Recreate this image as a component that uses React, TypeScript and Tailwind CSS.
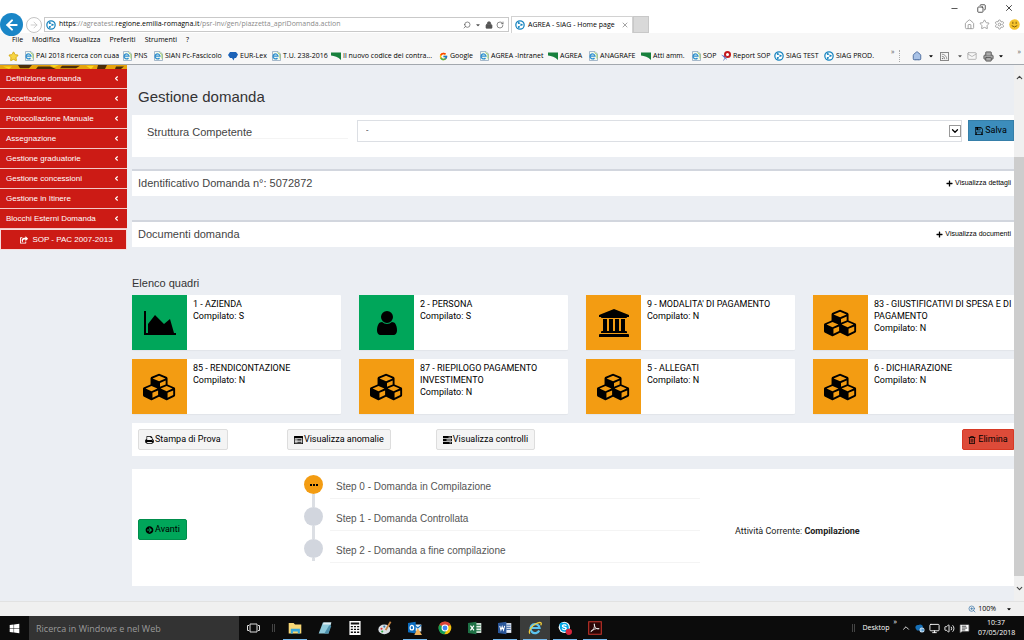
import React, { useState } from 'react';
import {
  Home, Star, Settings, Search, Lock, RotateCw, ArrowLeft, ArrowRight, Mail, Rss, Printer,
  ChevronUp, ChevronDown, ChevronLeft, Minus, X, Copy, Volume2, MessageSquareText, Monitor, ZoomIn,
} from 'lucide-react';
import { FaArrowCircleRight, FaPlus, FaRegTrashAlt, FaShareSquare, FaCaretDown, FaWindows, FaSkype } from 'react-icons/fa';
import { FcGoogle } from 'react-icons/fc';

const iconPaths = {
  chart: {
    box: '0 0 2048 1536',
    d: 'M2048 1408v128h-2048v-1536h128v1408h1920zM1664 512l256 896h-1664v-576l448-576 576 576z',
  },
  user: {
    box: '192 128 1408 1536',
    d: 'M1536 1399q0 109-62.5 187t-150.5 78h-854q-88 0-150.5-78t-62.5-187q0-85 8.5-160.5t31.5-152 58.5-131 94-89 134.5-34.5q131 128 313 128t313-128q76 0 134.5 34.5t94 89 58.5 131 31.5 152 8.5 160.5zm-256-887q0 159-112.5 271.5t-271.5 112.5-271.5-112.5-112.5-271.5 112.5-271.5 271.5-112.5 271.5 112.5 112.5 271.5z',
  },
  bank: {
    box: '0 0 1920 1792',
    d: 'M960 0l960 384v128h-128q0 26-20.5 45t-48.5 19h-1526q-28 0-48.5-19t-20.5-45h-128v-128zM256 640h256v768h128v-768h256v768h128v-768h256v768h128v-768h256v768h59q28 0 48.5 19t20.5 45v64h-1664v-64q0-26 20.5-45t48.5-19h59v-768zM1851 1600q28 0 48.5 19t20.5 45v128h-1920v-128q0-26 20.5-45t48.5-19h1782z',
  },
  cubes: {
    box: '0 0 2304 1792',
    d: 'M640 1632l384-192v-314l-384 164v342zm-64-454l404-173-404-173-404 173zm1088 454l384-192v-314l-384 164v342zm-64-454l404-173-404-173-404 173zm-448-293l384-165v-266l-384 164v267zm-64-379l441-189-441-189-441 189zm1088 518v416q0 36-19 67t-52 47l-448 224q-25 14-57 14t-57-14l-448-224q-4-2-7-4-2 2-7 4l-448 224q-25 14-57 14t-57-14l-448-224q-33-16-52-47t-19-67v-416q0-38 21.5-70t56.5-48l434-186v-400q0-38 21.5-70t56.5-48l448-192q23-10 50-10t50 10l448 192q35 16 56.5 48t21.5 70v400l434 186q36 16 57 48t21 70z',
  },
  print: {
    box: '64 128 1664 1536',
    d: 'M448 1536h896v-256h-896v256zm0-640h896v-384h-160q-40 0-68-28t-28-68v-160h-640v640zm1152 64q0-26-19-45t-45-19-45 19-19 45 19 45 45 19 45-19 19-45zm128 0v416q0 13-9.5 22.5t-22.5 9.5h-224v160q0 40-28 68t-68 28h-960q-40 0-68-28t-28-68v-160h-224q-13 0-22.5-9.5t-9.5-22.5v-416q0-79 56.5-135.5t135.5-56.5h64v-544q0-40 28-68t68-28h672q40 0 88 20t76 48l152 152q28 28 48 76t20 88v256h64q79 0 135.5 56.5t56.5 135.5z',
  },
  save: {
    box: '128 128 1536 1536',
    d: 'M512 1536h768v-384h-768v384zm896 0h128v-896q0-14-10-38.5t-20-34.5l-281-281q-10-10-34-20t-39-10v416q0 40-28 68t-68 28h-576q-40 0-68-28t-28-68v-416h-128v1280h128v-416q0-40 28-68t68-28h832q40 0 68 28t28 68v416zm-384-928v-320q0-13-9.5-22.5t-22.5-9.5h-192q-13 0-22.5 9.5t-9.5 22.5v320q0 13 9.5 22.5t22.5 9.5h192q13 0 22.5-9.5t9.5-22.5zm640 32v928q0 40-28 68t-68 28h-1344q-40 0-68-28t-28-68v-1344q0-40 28-68t68-28h928q40 0 88 20t76 48l280 280q28 28 48 76t20 88z',
  },
  list: {
    box: '0 0 18 16',
    d: 'M1 0h16a1 1 0 0 1 1 1v14a1 1 0 0 1-1 1H1a1 1 0 0 1-1-1V1a1 1 0 0 1 1-1zM1.500 4.500v10h15v-10zM3 6h2v1.500H3zM6.500 6H15v1.500H6.500zM3 9h2v1.500H3zM6.500 9H15v1.500H6.500zM3 12h2v1.500H3zM6.500 12H15v1.500H6.500z',
  },
  tasks: {
    box: '0 0 18 16',
    d: 'M0 0h18v4.400H0zM11 1.400v1.600h5.500V1.400zM0 5.800h18v4.400H0zM7 7.200v1.600h9.500V7.200zM0 11.600h18V16H0zM13 13v1.600h3.500V13z',
  },
};

type IconName = keyof typeof iconPaths;

function Icon({ name, className }: { name: IconName; className: string }) {
  return (
    <svg viewBox={iconPaths[name].box} className={className} fill="currentColor" fillRule="evenodd">
      <path d={iconPaths[name].d} />
    </svg>
  );
}

function SiagIcon({ className = 'w-3 h-3' }: { className?: string }) {
  return (
    <svg viewBox="0 0 24 24" className={className}>
      <circle cx="12" cy="12" r="10" fill="#fff" stroke="#1583bf" strokeWidth="3" />
      <path d="M9 7l6 4-6 6" fill="none" stroke="#1583bf" strokeWidth="1.500" />
      <g fill="#1583bf">
        <circle cx="9" cy="7" r="2.400" />
        <circle cx="16" cy="11.500" r="2.400" />
        <circle cx="9" cy="17" r="2.400" />
      </g>
    </svg>
  );
}

function BookmarkIcon({ kind }: { kind: string }) {
  if (kind === 'siag') return <SiagIcon className="w-[10px] h-[10px] shrink-0" />;
  if (kind === 'google') return <FcGoogle className="w-[9px] h-[9px] shrink-0" />;
  return (
    <svg viewBox="0 0 20 20" className="w-[10px] h-[10px] shrink-0">
      {kind === 'page' && (
        <>
          <path d="M3 1h11l5 5v13H3z" fill="#f4f9ee" stroke="#8ba4bd" strokeWidth="1.500" />
          <path d="M13 14a5 5 0 1 1 1-4H5" fill="none" stroke="#2f8fd0" strokeWidth="2.500" />
          <path d="M13 3l5 4v8" fill="none" stroke="#9ccb66" strokeWidth="2" />
        </>
      )}
      {kind === 'flag' && <path d="M0 3h20v15C14 12 7 10 0 9z" fill="#17803d" />}
      {kind === 'chat' && <path d="M4 2h12l4 5-4 7h-3l-2 5-3-5H4L0 8z" fill="#1c62b7" />}
      {kind === 'report' && (
        <>
          <path d="M0 7l9 4 3 7-5-4z" fill="#4f6fd0" />
          <circle cx="13" cy="7" r="5" fill="#fff" stroke="#c4161c" strokeWidth="4" />
          <path d="M10 11l-5 8" stroke="#7b8cc0" strokeWidth="2" />
        </>
      )}
    </svg>
  );
}

const bookmarks = [
  { label: 'PAI 2018 ricerca con cuaa', kind: 'page', width: 'w-[98px]' },
  { label: 'PNS', kind: 'page', width: 'w-[31px]' },
  { label: 'SIAN Pc-Fascicolo', kind: 'page', width: 'w-[75px]' },
  { label: 'EUR-Lex', kind: 'chat', width: 'w-[43px]' },
  { label: 'T.U. 238-2016', kind: 'page', width: 'w-[60px]' },
  { label: 'Il nuovo codice dei contra...', kind: 'flag', width: 'w-[108px]' },
  { label: 'Google', kind: 'google', width: 'w-[40px]' },
  { label: 'AGREA -Intranet', kind: 'page', width: 'w-[69px]' },
  { label: 'AGREA', kind: 'flag', width: 'w-[40px]' },
  { label: 'ANAGRAFE', kind: 'page', width: 'w-[53px]' },
  { label: 'Atti amm.', kind: 'flag', width: 'w-[50px]' },
  { label: 'SOP', kind: 'page', width: 'w-[30px]' },
  { label: 'Report SOP', kind: 'report', width: 'w-[53px]' },
  { label: 'SIAG TEST', kind: 'siag', width: 'w-[50px]' },
  { label: 'SIAG PROD.', kind: 'siag', width: 'w-[60px]' },
];

const menuItems = [
  'Definizione domanda',
  'Accettazione',
  'Protocollazione Manuale',
  'Assegnazione',
  'Gestione graduatorie',
  'Gestione concessioni',
  'Gestione in Itinere',
  'Blocchi Esterni Domanda',
];

const quadri: { title: string; status: string; icon: IconName; size: string }[] = [
  { title: '1 - AZIENDA', status: 'S', icon: 'chart', size: 'w-8 h-6' },
  { title: '2 - PERSONA', status: 'S', icon: 'user', size: 'w-6 h-6' },
  { title: "9 - MODALITA' DI PAGAMENTO", status: 'N', icon: 'bank', size: 'w-[30px] h-7' },
  { title: '83 - GIUSTIFICATIVI DI SPESA E DI PAGAMENTO', status: 'N', icon: 'cubes', size: 'w-[34px] h-7' },
  { title: '85 - RENDICONTAZIONE', status: 'N', icon: 'cubes', size: 'w-[34px] h-7' },
  { title: '87 - RIEPILOGO PAGAMENTO INVESTIMENTO', status: 'N', icon: 'cubes', size: 'w-[34px] h-7' },
  { title: '5 - ALLEGATI', status: 'N', icon: 'cubes', size: 'w-[34px] h-7' },
  { title: '6 - DICHIARAZIONE', status: 'N', icon: 'cubes', size: 'w-[34px] h-7' },
];

const actions: { label: string; icon: IconName }[] = [
  { label: 'Stampa di Prova', icon: 'print' },
  { label: 'Visualizza anomalie', icon: 'list' },
  { label: 'Visualizza controlli', icon: 'tasks' },
];

const steps = ['Step 0 - Domanda in Compilazione', 'Step 1 - Domanda Controllata', 'Step 2 - Domanda a fine compilazione'];

function BrowserHeader() {
  return (
    <header className="bg-white font-['Open_Sans','Noto_Sans',sans-serif] text-[7px] text-black border-b border-[#a3a8ae]">
      <div className="flex h-4 items-center justify-end gap-[18px] pr-[10px] text-[#222]">
        <button aria-label="Riduci"><Minus className="w-[9px] h-[9px]" /></button>
        <button aria-label="Ripristina"><Copy className="w-[9px] h-[9px] -scale-x-100" /></button>
        <button aria-label="Chiudi"><X className="w-[10px] h-[10px]" /></button>
      </div>
      <div className="flex h-[17px] items-center">
        <button aria-label="Indietro" className="relative z-10 w-[23px] h-[23px] shrink-0 rounded-full bg-[#1a86c7] text-white flex items-center justify-center">
          <ArrowLeft className="w-4 h-4" strokeWidth={3} />
        </button>
        <button aria-label="Avanti" className="ml-[3px] w-4 h-4 shrink-0 rounded-full border border-[#c4c4c4] text-[#c4c4c4] flex items-center justify-center">
          <ArrowRight className="w-[10px] h-[10px]" />
        </button>
        <div className="ml-[2px] w-[46%] max-w-[465px] h-[15px] border border-[#c9c9c9] flex items-center shrink-0 px-[1px] pr-1 text-[#555]">
          <SiagIcon className="w-[10px] h-[10px] shrink-0" />
          <span className="ml-[3px] flex-1 whitespace-nowrap text-[#8a8a8a]">
            <span className="text-black">https</span>://agreatest.<span className="text-black">regione.emilia-romagna.it</span>/psr-inv/gen/piazzetta_apriDomanda.action
          </span>
          <Search className="w-2 h-2 -scale-x-100" />
          <FaCaretDown className="ml-1 w-[6px] h-[6px]" />
          <Lock className="ml-1 w-2 h-2" fill="currentColor" />
          <RotateCw className="ml-[3px] w-2 h-2" />
        </div>
        <div className="ml-[2px] w-[122px] h-[17px] shrink-0 border-x border-t border-[#d2d2d2] bg-white flex items-center px-[3px]">
          <SiagIcon className="w-[10px] h-[10px] shrink-0" />
          <span className="ml-[3px] flex-1 whitespace-nowrap">AGREA - SIAG - Home page</span>
          <X className="w-2 h-2 text-[#777]" />
        </div>
        <button aria-label="Nuova scheda" className="w-4 h-[17px] shrink-0 bg-[#d9d9d9] border border-[#c8c8c8]" />
        <div className="ml-auto flex items-center gap-1 pr-1 text-[#9b9b9b]">
          <Home className="w-[11px] h-[11px]" />
          <Star className="w-[11px] h-[11px]" />
          <Settings className="w-[11px] h-[11px]" />
          <svg viewBox="0 0 20 20" className="w-[11px] h-[11px]">
            <circle cx="10" cy="10" r="9.500" fill="#f5c32c" />
            <path d="M7 5v4M13 5v4M5 12q5 5 10 0" fill="none" stroke="#6b4b00" strokeWidth="1.500" />
          </svg>
        </div>
      </div>
      <nav className="flex h-[15px] items-center gap-[9px] bg-[#f7f7f7] pl-3">
        {['File', 'Modifica', 'Visualizza', 'Preferiti', 'Strumenti', '?'].map((item) => (
          <button key={item}>{item}</button>
        ))}
      </nav>
      <div className="flex h-4 items-center bg-[#f7f7f7] pl-2">
        <Star className="w-[11px] h-[11px] mr-[5px] shrink-0 text-[#d3a712]" fill="#f7d543" />
        {bookmarks.map((b) => (
          <a key={b.label} href="#" className={`${b.width} shrink-0 flex items-center gap-[2px] whitespace-nowrap`}>
            <BookmarkIcon kind={b.kind} />
            {b.label}
          </a>
        ))}
        <div className="ml-auto flex items-center shrink-0 text-[#555]">
          <span className="mr-1 pb-2">»</span>
          <span className="h-3 border-l border-dotted border-[#aaa] mr-3" />
          <Home className="w-[10px] h-[10px] text-[#3d5f93]" fill="#a9c2e6" />
          <FaCaretDown className="ml-[6px] w-[6px] h-[6px] text-black" />
          <Rss className="ml-[6px] w-[9px] h-[9px] border border-[#888]" />
          <FaCaretDown className="ml-2 w-[6px] h-[6px]" />
          <Mail className="ml-1 w-[10px] h-[10px] text-[#aaa]" />
          <Printer className="ml-[6px] w-[11px] h-[11px]" fill="#aaa" />
          <FaCaretDown className="ml-1 w-[6px] h-[6px] text-black" />
          <span className="ml-[14px] mr-[3px] pb-2">»</span>
        </div>
      </div>
    </header>
  );
}

function Sidebar() {
  return (
    <aside className="w-[127px] shrink-0 font-['Liberation_Sans',Arial,sans-serif] text-[8px] text-white">
      <svg viewBox="0 0 127 5" preserveAspectRatio="none" className="block w-full h-[4px]">
        <rect width="127" height="5" fill="#e5a20c" />
        <path d="M18 0h14l-3 4h-9zM38 2h12l6 3H36zM62 1h18l-4 3H60zM98 0h9l-2 5h-8zM116 2h8l-3 3h-6z" fill="#4b2c08" />
        <path d="M3 2h9l-3 3zM50 0h9l-5 3zM86 1h8l-3 4z" fill="#f8d51b" />
      </svg>
      <nav>
        {menuItems.map((item) => (
          <a key={item} href="#" className="flex h-5 items-center justify-between bg-[#cc1b15] border-b border-[#f3c9c7] pl-[6px] pr-[7px]">
            {item}
            <ChevronLeft className="w-[7px] h-[7px]" strokeWidth={4} />
          </a>
        ))}
        <a href="#" className="flex h-[21px] items-center justify-center gap-1 bg-[#cc1b15] border border-[#f6dcdb] pl-[6px]">
          <FaShareSquare className="w-2 h-2" />
          SOP - PAC 2007-2013
        </a>
      </nav>
    </aside>
  );
}

function CollapsedBox({ title, action }: { title: string; action: string }) {
  return (
    <section className="flex h-[27px] items-center justify-between border-t-2 border-[#d2d6de] bg-white pl-[6px] pr-[3px] pb-px font-['Liberation_Sans',Arial,sans-serif]">
      <h2 className="text-[11px] text-[#444]">{title}</h2>
      <button className="flex items-center gap-[2px] text-[7px] text-black">
        <FaPlus className="w-[7px] h-[7px]" />
        {action}
      </button>
    </section>
  );
}

function MainContent() {
  const [struttura, setStruttura] = useState('-');

  return (
    <main className="min-w-0 flex-1 overflow-hidden pl-[5px] pb-[15px]">
      <h1 className="h-[50px] pt-[21px] pl-[6px] font-['Liberation_Sans',Arial,sans-serif] text-[15px] leading-[22px] text-[#333]">Gestione domanda</h1>

      <section className="flex h-[42px] bg-white pt-[5px] pl-[15px]">
        <label htmlFor="struttura" className="mr-[9px] h-[19px] w-[201px] shrink-0 border-b border-[#f4f4f4] font-['Liberation_Sans',Arial,sans-serif] text-[11px] leading-6 text-[#444]">
          Struttura Competente
        </label>
        <div className="relative flex-1">
          <select
            id="struttura"
            value={struttura}
            onChange={(e) => setStruttura(e.target.value)}
            className="block h-[22px] w-full appearance-none border border-[#dcdfe4] bg-white pl-2 text-[9px] text-[#555]"
          >
            <option>-</option>
          </select>
          <span className="pointer-events-none absolute right-[1px] top-[5px] flex h-3 w-3 items-center justify-center border border-[#999] bg-white text-black">
            <ChevronDown className="h-[10px] w-[10px]" strokeWidth={3} />
          </span>
        </div>
        <button className="ml-[6px] flex h-[21px] w-[46px] shrink-0 items-center justify-center gap-[2px] border border-[#367fa9] bg-[#3c8dbc] text-[9px] text-black">
          <Icon name="save" className="h-2 w-2" />
          Salva
        </button>
      </section>

      <div className="mt-3 flex flex-col gap-6">
        <CollapsedBox title="Identificativo Domanda n°: 5072872" action="Visualizza dettagli" />
        <CollapsedBox title="Documenti domanda" action="Visualizza documenti" />
      </div>

      <h2 className="mt-[29px] font-['Liberation_Sans',Arial,sans-serif] text-[11px] leading-[15px] text-[#333]">Elenco quadri</h2>
      <div className="-mr-2 mt-1 grid grid-cols-4 gap-x-[18px] gap-y-[9px]">
        {quadri.map((q) => (
          <a key={q.title} href="#" className="flex h-[55px] rounded-[1px] bg-white text-black shadow-[0_1px_1px_rgba(0,0,0,0.04)]">
            <span className={`flex w-[55px] shrink-0 items-center justify-center ${q.status === 'S' ? 'bg-[#00a65a]' : 'bg-[#f39c12]'}`}>
              <Icon name={q.icon} className={q.size} />
            </span>
            <span className="pl-[6px] pt-[3px] text-[9px] leading-3">
              <span className="block">{q.title}</span>
              <span className="block">Compilato: {q.status}</span>
            </span>
          </a>
        ))}
      </div>

      <section className="mt-[9px] flex h-[33px] items-center bg-white pl-[6px] text-[9px]">
        {actions.map((a) => (
          <div key={a.label} className="w-[17%]">
            <button className="flex h-[21px] items-center gap-[1px] rounded-[2px] border border-[#ddd] bg-[#f4f4f4] px-[6px] text-black">
              <Icon name={a.icon} className="h-2 w-[9px]" />
              {a.label}
            </button>
          </div>
        ))}
        <button className="ml-auto flex h-[21px] w-[52px] items-center justify-center gap-[2px] rounded-l-[2px] border border-[#d73925] bg-[#dd4b39] text-black">
          <FaRegTrashAlt className="h-2 w-2" />
          Elimina
        </button>
      </section>

      <section className="mt-[13px] flex h-[117px] items-center bg-white pl-[6px] text-[9px]">
        <div className="w-[166px] pt-1">
          <button className="flex h-[21px] items-center gap-[1px] rounded-[2px] border border-[#008d4c] bg-[#00a65a] px-[6px] text-black">
            <FaArrowCircleRight className="h-2 w-[9px]" />
            Avanti
          </button>
        </div>
        <ol className="w-[396px] self-start pt-[6px]">
          {steps.map((step, i) => (
            <li key={step} className="flex h-8">
              <div className={`flex w-[19px] flex-col items-center ${i === 2 ? 'h-[22px]' : ''}`}>
                <span className={`flex h-[19px] w-[19px] shrink-0 items-center justify-center gap-[1px] rounded-full ${i === 0 ? 'bg-[#f39c12]' : 'bg-[#d2d6de]'}`}>
                  {i === 0 && [0, 1, 2].map((dot) => <span key={dot} className="h-[2px] w-[2px] bg-black" />)}
                </span>
                <span className="w-[3px] flex-1 bg-[#dcdfe4]" />
              </div>
              <div className="ml-[7px] h-6 flex-1 border-b border-[#f4f4f4] pl-[6px] font-['Liberation_Sans',Arial,sans-serif] text-[10px] leading-6 text-[#555]">{step}</div>
            </li>
          ))}
        </ol>
        <p className="ml-[35px] pt-2 text-[#222]">
          Attività Corrente: <strong>Compilazione</strong>
        </p>
      </section>
    </main>
  );
}

function Scrollbar() {
  return (
    <div className="flex w-[10px] shrink-0 flex-col items-center bg-[#f0f0f0] text-[#444]">
      <ChevronUp className="my-2 h-[9px] w-[9px]" strokeWidth={3} />
      <div className="mt-[67px] w-full flex-1 bg-[#cdcdcd]" />
      <ChevronDown className="my-2 h-[9px] w-[9px]" strokeWidth={3} />
    </div>
  );
}

const taskbarApps = [
  { name: 'Esplora file', open: true, art: <><path d="M1 3h7l2 2h9v13H1z" fill="#f8d775" /><path d="M4 11h13v7h-3v-3H7v3H4z" fill="#37a7dc" /></> },
  { name: 'Blocco note', open: false, art: <><path d="M7 2h12l-4 16H1z" fill="#8fcbdc" /><path d="M8 2h11l-1 3H7z" fill="#e3eef2" /><path d="M16 6l3 1-4 11H9z" fill="#4d91ad" /></> },
  { name: 'Calcolatrice', open: false, art: <><path d="M2 0h16v20H2z" fill="#fff" /><path d="M4 2h12v3H4zM4 7h3v2H4zM8.500 7h3v2h-3zM13 7h3v2h-3zM4 11h3v2H4zM8.500 11h3v2h-3zM13 11h3v2h-3zM4 15h3v2H4zM8.500 15h3v2h-3zM13 15h3v2h-3z" fill="#111" /></> },
  { name: 'Paint', open: false, art: <><ellipse cx="9" cy="12" rx="8.500" ry="7" fill="#d9dee3" /><circle cx="5" cy="11" r="1.500" fill="#d33" /><circle cx="9" cy="8" r="1.500" fill="#37a" /><circle cx="6" cy="15" r="1.500" fill="#3a4" /><path d="M18 1l-7 12" stroke="#c68342" strokeWidth="2.500" /></> },
  { name: 'Outlook', open: true, art: <><path d="M9 5h10v10H9z" fill="#dcecf8" /><path d="M9 6l5 4 5-4" fill="none" stroke="#0b6cbf" strokeWidth="1.500" /><path d="M0 3l11-2v17L0 16z" fill="#0b6cbf" /><ellipse cx="5.500" cy="9.500" rx="2.500" ry="3.300" fill="none" stroke="#fff" strokeWidth="1.800" /><path d="M14 10l6 10H9z" fill="#efb15b" /></> },
  { name: 'Chrome', open: false, art: <><circle cx="10" cy="10" r="9" fill="#f4c20d" /><path d="M10 10L2 5.500A9 9 0 0 1 18 5.500z" fill="#db4437" /><path d="M10 10L2 5.500A9 9 0 0 0 9 19l4-7z" fill="#0f9d58" /><circle cx="10" cy="10" r="4.200" fill="#4285f4" stroke="#fff" strokeWidth="1.500" /></> },
  { name: 'Excel', open: false, art: <><path d="M10 3h9v14h-9z" fill="#e7f3eb" /><path d="M11 6h7M11 10h7M11 14h7" stroke="#1e7145" strokeWidth="1.500" /><path d="M0 3l12-2v18L0 17z" fill="#1e7145" /><path d="M3.500 6.500l5 7M8.500 6.500l-5 7" stroke="#fff" strokeWidth="1.700" /></> },
  { name: 'Word', open: true, art: <><path d="M10 3h9v14h-9z" fill="#e8eef8" /><path d="M12 6h6M12 9h6M12 12h6" stroke="#2b579a" strokeWidth="1.300" /><path d="M0 3l12-2v18L0 17z" fill="#2b579a" /><path d="M2.500 7l1.700 6L6 8l1.800 5L9.500 7" fill="none" stroke="#fff" strokeWidth="1.500" /></> },
  { name: 'Internet Explorer', open: true, art: <><path d="M16 13.500A6.500 6.500 0 1 1 16.500 10H5" fill="none" stroke="#5cc3f0" strokeWidth="3.200" /><path d="M3 18C-1 16 6 4 17 2c3 0 2 3 1 4" fill="none" stroke="#f4cf3a" strokeWidth="1.800" /></> },
  { name: 'Skype', open: true, art: <><circle cx="9" cy="9" r="8" fill="#fff" /><FaSkype x="1" y="1" width="16" height="16" color="#00a8e6" /><circle cx="15.500" cy="15.500" r="4.500" fill="#d7263d" /></> },
  { name: 'Acrobat Reader', open: true, art: <><path d="M1 1h18v18H1z" fill="#2a0606" stroke="#c8342b" strokeWidth="1.500" /><path d="M4 15c4-2 6-6 5-11 0 5 3 8 7 7-5-1-8 1-12 4z" fill="none" stroke="#eee" strokeWidth="1.300" /></> },
];

function Taskbar() {
  return (
    <footer className="flex h-6 items-center bg-[#0c0c0c] font-['Open_Sans','Noto_Sans',sans-serif] text-white">
      <button aria-label="Start" className="flex w-[29px] shrink-0 justify-center">
        <FaWindows className="h-[11px] w-[11px]" />
      </button>
      <input
        type="text"
        aria-label="Ricerca"
        placeholder="Ricerca in Windows e nel Web"
        className="h-6 w-[210px] shrink-0 bg-[#333] pl-[7px] text-[9px] text-white placeholder:text-[#9a9a9a]"
      />
      <button aria-label="Visualizzazione attività" className="flex w-[29px] shrink-0 justify-center">
        <svg viewBox="0 0 26 20" className="h-[10px] w-[13px]" fill="none" stroke="#ddd" strokeWidth="2">
          <path d="M6 2h14v16H6zM4 5H1v10h3M22 5h3v10h-3" />
        </svg>
      </button>
      <span className="ml-1 mr-[5px] h-2 w-[3px] border-x border-[#444]" />
      {taskbarApps.map((app) => (
        <button
          key={app.name}
          aria-label={app.name}
          className={`flex h-6 w-[30px] shrink-0 items-center justify-center ${app.name === 'Internet Explorer' ? 'bg-[#3b3d3c]' : ''}`}
        >
          <span className={`flex h-6 w-6 items-center justify-center border-b ${app.open ? 'border-[#76b9ed]' : 'border-transparent'}`}>
            <svg viewBox="0 0 20 20" className="h-[14px] w-[14px]">{app.art}</svg>
          </span>
        </button>
      ))}
      <div className="ml-auto flex shrink-0 items-center gap-1 pr-[10px] text-[7px]">
        <span className="mr-1 h-2 w-[3px] border-x border-[#444]" />
        <span>Desktop</span>
        <span className="pb-3">»</span>
        <ChevronUp className="h-[10px] w-[10px]" />
        <svg viewBox="0 0 20 20" className="h-[10px] w-[10px]">
          <path d="M2 12a5 5 0 0 1 5-8 6 6 0 0 1 9 4l-5 7H4z" fill="#1670b8" />
          <circle cx="14" cy="14" r="5" fill="#c9e2f5" />
          <path d="M11 14h6M14 11l3 3-3 3" fill="none" stroke="#1670b8" strokeWidth="1.500" />
        </svg>
        <Monitor className="h-[11px] w-[11px]" />
        <Volume2 className="h-[11px] w-[11px]" />
        <MessageSquareText className="h-[11px] w-[11px] text-[#333]" fill="#fff" />
        <div className="ml-1 w-9 text-center leading-[10px]">
          <div>10:37</div>
          <div>07/05/2018</div>
        </div>
      </div>
    </footer>
  );
}

function App() {
  return (
    <div className="flex min-h-screen flex-col overflow-hidden bg-[#ebeef3] font-['Roboto','Liberation_Sans',Arial,sans-serif]">
      <BrowserHeader />
      <div className="flex flex-1">
        <Sidebar />
        <MainContent />
        <Scrollbar />
      </div>
      <div className="flex h-[15px] items-center justify-end gap-[2px] border-t border-[#e2e2e2] bg-[#f0f0f0] pr-3 font-['Open_Sans','Noto_Sans',sans-serif] text-[7px] text-black">
        <ZoomIn className="h-2 w-2 text-[#2f6ea5]" />
        100%
        <FaCaretDown className="ml-2 h-[6px] w-[6px]" />
      </div>
      <Taskbar />
    </div>
  );
}

export default App;
